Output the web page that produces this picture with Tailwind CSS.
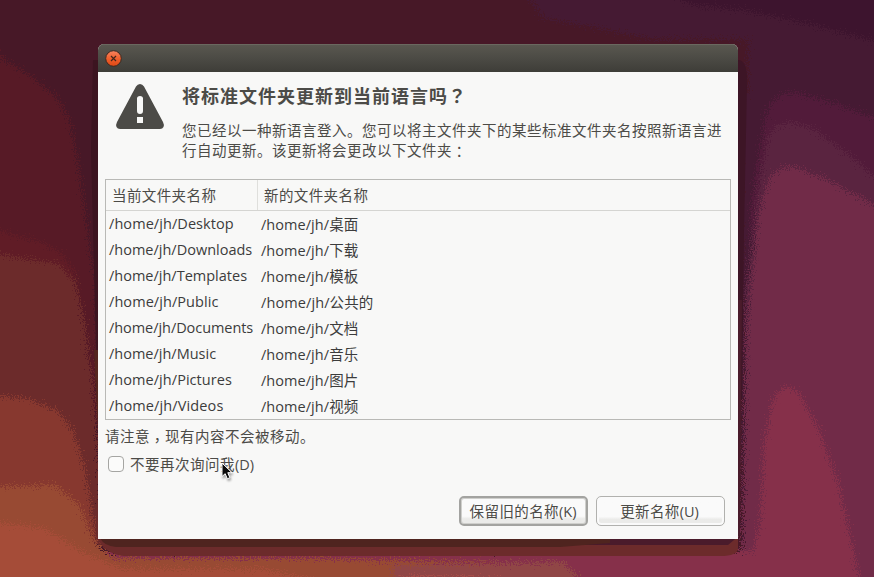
<!DOCTYPE html>
<html lang="zh-CN">
<head>
<meta charset="utf-8">
<title>更新文件夹名称</title>
<script src="https://cdn.jsdelivr.net/npm/@tailwindcss/browser@4"></script>
</head>
<body class="relative h-[577px] w-[874px] overflow-hidden bg-[#471827] font-['Open_Sans','Noto_Sans_CJK_SC',sans-serif] text-[15px] text-[#4c4b47]">
<!-- Wallpaper -->
<svg class="absolute inset-0" width="874" height="577" viewBox="0 0 874 577">
  <defs>
    <filter id="grain" x="-20" y="-20" width="914" height="617" filterUnits="userSpaceOnUse" color-interpolation-filters="sRGB">
      <feTurbulence type="fractalNoise" baseFrequency="0.8" numOctaves="1" seed="3" result="n"/>
      <feDisplacementMap in="SourceGraphic" in2="n" scale="24" xChannelSelector="R" yChannelSelector="G"/>
    </filter>
  </defs>
  <g filter="url(#grain)" transform="translate(3 3)">
    <rect x="-20" y="-20" width="920" height="620" fill="#471827"/>
    <path d="M515 -20L540 15L650 36H745V130H900V-20Z" fill="#451a33"/>
    <path d="M640 -20L690 2L745 8L810 22L900 45V-20Z" fill="#3d142e"/>
    <path d="M-20 38L0 55L30 75L52 92L66 115L77 170L84 225L92 280L96 420H-20Z" fill="#571a26"/>
    <path d="M-20 222L0 229L40 240L58 250L72 270L80 310H-20Z" fill="#601c26"/>
    <path d="M-20 250L0 252L55 261L72 278L80 310L90 380L97 470L100 577H-20Z" fill="#6c2b2b"/>
    <path d="M-20 390L25 396L55 408L70 428L82 465L90 515L96 545L110 590H-20Z" fill="#87382f"/>
    <path d="M738 90L800 90L900 125V600H738Z" fill="#451a33"/>
    <path d="M748 200L762 115Q768 90 792 89L830 100L900 125V600H745Z" fill="#521b3a"/>
    <path d="M742 290L756 180L766 130Q780 110 812 128L850 155L900 200V600H738Z" fill="#5a2440"/>
    <path d="M744 320L756 210L765 178Q772 163 792 164L825 177L900 217V600H738Z" fill="#712b48"/>
    <path d="M738 600L757 520L761 440L769 400Q780 372 798 393L815 425L835 480L862 600Z" fill="#86304a"/>
    <rect x="90" y="548" width="762" height="50" fill="#86304a"/>
    <path d="M-20 484L52 482L76 501L92 539L110 555L300 555L500 560L590 600H-20Z" fill="#984a33"/>
    <path d="M390 562L560 559L600 600H390Z" fill="#904646"/>
    <path d="M-20 518L42 525L78 548L120 566L260 566L420 600H-20Z" fill="#a54c38"/>
    <path d="M300 600L410 573L500 577L540 600Z" fill="#a54c48"/>
  </g>
  <path d="M747 290H738V548Q738 556 720 556H124Q104 554 96 536V500H738V290Z" fill="#6c2b2b"/>
  <path d="M738 60Q748 60 747 85L744 230L742 400H738Z" fill="#3d1526"/>
  <path d="M93 60H98V350H96L91 150Z" fill="#3c1420"/>
  <path d="M94 350H98V430Z" fill="#55251f"/>
  <path d="M738 300H742L740 535L728 545H560V530H738Z" fill="#4a1b2b"/>
  <path d="M100 538H610V543L560 547H116Q104 546 100 538Z" fill="#4f241f"/>
</svg>

<!-- Dialog -->
<main class="relative mt-11 ml-[98px] flex h-[495px] w-[640px] flex-col overflow-hidden rounded-t-[6px] bg-[#f8f8f7]">
  <header class="flex h-7 shrink-0 items-center bg-linear-to-b from-[#5a5850] via-[#4c4b45] to-[#3e3d38] pl-[7px] shadow-[inset_0_1px_0_#6a685f]">
    <svg width="17" height="17" viewBox="0 0 17 17">
      <defs><linearGradient id="close" x2="0" y2="1"><stop stop-color="#f78460"/><stop offset=".5" stop-color="#f0602e"/><stop offset="1" stop-color="#dd4814"/></linearGradient></defs>
      <circle cx="8.5" cy="8.5" r="7.8" fill="url(#close)" stroke="#3c2a22"/>
      <path d="M6 6L11 11M11 6L6 11" stroke="#44261b" stroke-width="1.2"/>
    </svg>
  </header>

  <section class="flex h-[107px] shrink-0 pl-[17px]">
    <svg class="mt-3 shrink-0" width="50" height="46" viewBox="0 0 50 46">
      <path fill="#4c4b47" fill-rule="evenodd" d="M25 0Q27.5 0 29 2.5L48 38Q49.5 41 48.5 43Q47.5 45 45 45H5Q2.500 45 1.500 43Q.5 41 2 38L21 2.500Q22.500 0 25 0ZM25 12Q22 12 22 14.500V27Q22 30 25 30Q28 30 28 27V14.500Q28 12 25 12ZM22 33V39H28V33Z"/>
    </svg>
    <div class="ml-[17px] w-[550px]">
      <h1 class="mt-[10px] h-7 text-[18px] leading-7 font-bold tracking-[1px] whitespace-nowrap">将标准文件夹更新到当前语言吗<span lang="zh-TW" class="font-['Noto_Sans_CJK_TC',sans-serif] leading-none">？</span></h1>
      <p class="mt-[11px] text-[14.5px] leading-5 tracking-[0.5px] whitespace-nowrap">您已经以一种新语言登入。您可以将主文件夹下的某些标准文件夹名按照新语言进<br>行自动更新。该更新将会更改以下文件夹<span lang="zh-TW" class="relative top-px font-['Noto_Sans_CJK_TC',sans-serif] leading-none">：</span></p>
    </div>
  </section>

  <section class="ml-[7px] flex h-[241px] w-[626px] shrink-0 flex-col border border-[#b9b9b6] text-[#3c3c3c]">
    <div class="flex h-[31px] shrink-0 border-b border-[#d5d5d2] text-[14.5px] leading-[31px] tracking-[0.4px] text-[#4c4b47]">
      <div class="w-[152px] border-r border-[#dfdfdc] pl-[6px]">当前文件夹名称</div>
      <div class="pl-[6px]">新的文件夹名称</div>
    </div>
    <div class="grid grid-cols-[152px_1fr] auto-rows-[26px] pl-[3px] text-[14.5px] leading-[26px] whitespace-nowrap">
      <div class="tracking-[0.07px]">/home/jh/Desktop</div><div class="pt-px tracking-[0.05px]">/home/jh/桌面</div>
      <div>/home/jh/Downloads</div><div class="pt-px tracking-[0.05px]">/home/jh/下载</div>
      <div>/home/jh/Templates</div><div class="pt-px tracking-[0.05px]">/home/jh/模板</div>
      <div class="tracking-[0.07px]">/home/jh/Public</div><div class="pt-px tracking-[0.1px]">/home/jh/公共的</div>
      <div class="tracking-[-0.06px]">/home/jh/Documents</div><div class="pt-px tracking-[0.05px]">/home/jh/文档</div>
      <div>/home/jh/Music</div><div class="pt-px tracking-[0.05px]">/home/jh/音乐</div>
      <div class="tracking-[0.05px]">/home/jh/Pictures</div><div class="pt-px tracking-[0.05px]">/home/jh/图片</div>
      <div class="tracking-[0.12px]">/home/jh/Videos</div><div class="pt-px tracking-[0.05px]">/home/jh/视频</div>
    </div>
  </section>

  <p class="mt-[6px] ml-[7px] h-[22px] text-[14.5px] leading-[22px] tracking-[0.5px]">请注意<span lang="zh-TW" class="relative top-1 font-['Noto_Sans_CJK_TC',sans-serif] leading-none">，</span>现有内容不会被移动。</p>
  <label class="mt-[6px] ml-[10px] flex h-[22px] items-center gap-[6px] text-[14.5px] tracking-[0.5px]">
    <span class="mb-[3px] h-4 w-4 rounded-[4px] border border-[#a5a5a2] bg-[#fbfbfa]"></span>
    <span class="leading-[22px]">不要再次询问我<span class="tracking-normal">(D)</span></span>
  </label>

  <footer class="mt-5 flex justify-end gap-2 pr-[13px] text-[14.5px] tracking-[0.4px]">
    <button class="h-[30px] w-[129px] rounded-[5px] border-2 border-[#a3a3a0] bg-linear-to-b from-[#fafafa] from-70% to-[#ebebe9] to-80% pt-px pr-px leading-[26px] shadow-[inset_0_0_0_1px_#cfcfcc]">保留旧的名称<span class="tracking-normal">(K)</span></button>
    <button class="h-[30px] w-[129px] rounded-[5px] border border-[#b1b1ae] bg-linear-to-b from-[#fafafa] from-70% to-[#ebebe9] to-80% pt-px pr-[2px] leading-[28px] shadow-[inset_0_0_0_2px_#fafafa]">更新名称<span class="tracking-normal">(U)</span></button>
  </footer>
</main>

<!-- Pointer -->
<svg class="absolute top-[462px] left-[221px] drop-shadow-[1px_2px_1px_rgba(0,0,0,0.35)]" width="14" height="20" viewBox="0 0 14 20">
  <path d="M1 1V14.500L4.200 11.700L6.300 16.800L8.900 15.700L6.800 10.700H11Z" fill="#0a0a0a" stroke="#fff" stroke-width="1"/>
</svg>
</body>
</html>
